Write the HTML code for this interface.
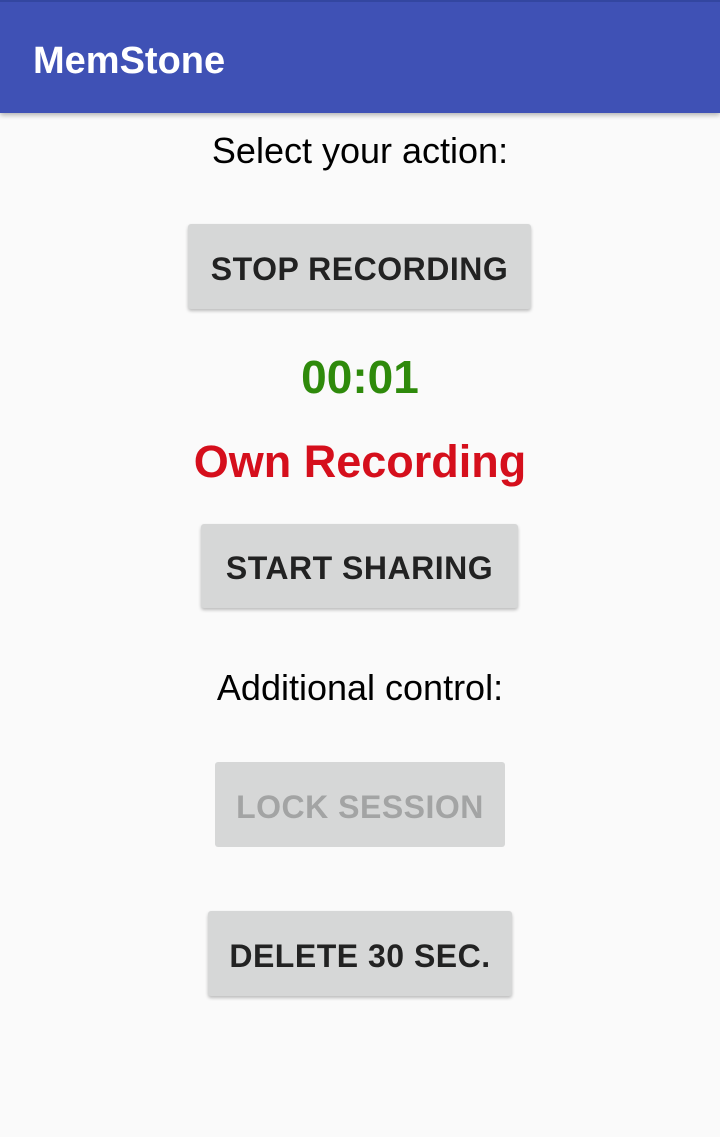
<!DOCTYPE html>
<html><head><style>
body{margin:0;width:720px;height:1137px;background:#fafafa;font-family:"Liberation Sans",sans-serif;position:relative;overflow:hidden}
.bar{position:absolute;left:0;top:0;width:720px;height:113px;background:#3f51b5;border-top:2px solid #3346a0;box-sizing:border-box;box-shadow:0 2px 5px rgba(0,0,0,.3)}
.bar span{position:absolute;left:33px;top:38px;color:#fff;font-size:38px;font-weight:bold;letter-spacing:0px}
.t{position:absolute;left:0;width:720px;text-align:center}
.b{position:absolute;background:#d6d7d7;border-radius:3px;box-shadow:0 2px 3px rgba(0,0,0,.25);display:flex;align-items:center;justify-content:center;font-size:32px;font-weight:bold;color:#222;letter-spacing:0.5px;padding-top:5px;box-sizing:border-box}
</style></head><body>
<div class="bar"><span>MemStone</span></div>
<div class="t" style="top:130px;font-size:36px;color:#000">Select your action:</div>
<div class="b" style="left:188px;top:224px;width:343px;height:85px">STOP RECORDING</div>
<div class="t" style="top:350px;font-size:46px;font-weight:bold;color:#2e8a0b">00:01</div>
<div class="t" style="top:436px;font-size:45px;font-weight:bold;color:#d50f1c">Own Recording</div>
<div class="b" style="left:201px;top:524px;width:317px;height:84px">START SHARING</div>
<div class="t" style="top:667px;font-size:36px;color:#000">Additional control:</div>
<div class="b" style="left:215px;top:762px;width:290px;height:85px;color:#a3a4a4;box-shadow:none">LOCK SESSION</div>
<div class="b" style="left:208px;top:911px;width:304px;height:85px">DELETE 30 SEC.</div>
</body></html>
